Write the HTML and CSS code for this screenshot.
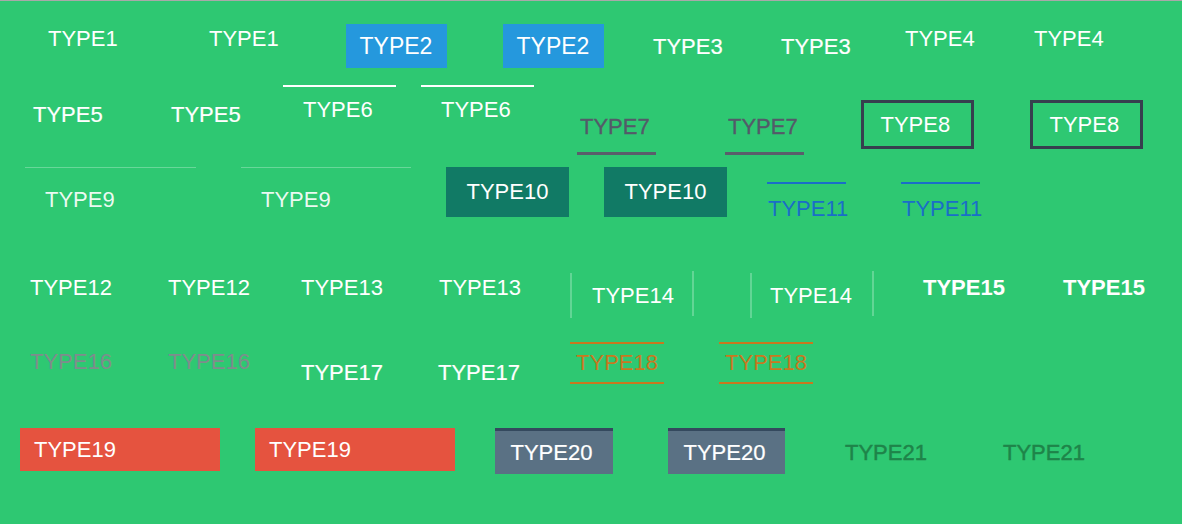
FILE: index.html
```html
<!DOCTYPE html>
<html lang="en">
<head>
<meta charset="utf-8">
<title>Type styles</title>
<link rel="stylesheet" href="styles.css">
</head>
<body>
<main class="page">
  <div class="row row1">
    <span class="t t1">TYPE1</span>
    <span class="t t1">TYPE1</span>
    <span class="t t2">TYPE2</span>
    <span class="t t2">TYPE2</span>
    <span class="t t3">TYPE3</span>
    <span class="t t3">TYPE3</span>
    <span class="t t4">TYPE4</span>
    <span class="t t4">TYPE4</span>
  </div>
  <div class="row row2">
    <span class="t t5">TYPE5</span>
    <span class="t t5">TYPE5</span>
    <span class="t t6">TYPE6</span>
    <span class="t t6">TYPE6</span>
    <span class="t t7">TYPE7</span>
    <span class="t t7">TYPE7</span>
    <span class="t t8">TYPE8</span>
    <span class="t t8">TYPE8</span>
  </div>
  <div class="row row3">
    <span class="t t9">TYPE9</span>
    <span class="t t9 t9b">TYPE9</span>
    <span class="t t10">TYPE10</span>
    <span class="t t10">TYPE10</span>
    <span class="t t11">TYPE11</span>
    <span class="t t11">TYPE11</span>
  </div>
  <div class="row row4">
    <span class="t t12">TYPE12</span>
    <span class="t t12">TYPE12</span>
    <span class="t t13">TYPE13</span>
    <span class="t t13">TYPE13</span>
    <span class="t t14">TYPE14</span>
    <span class="t t14 t14b">TYPE14</span>
    <span class="t t15">TYPE15</span>
    <span class="t t15">TYPE15</span>
  </div>
  <div class="row row5">
    <span class="t t16">TYPE16</span>
    <span class="t t16">TYPE16</span>
    <span class="t t17">TYPE17</span>
    <span class="t t17">TYPE17</span>
    <span class="t t18">TYPE18</span>
    <span class="t t18">TYPE18</span>
  </div>
  <div class="row row6">
    <span class="t t19">TYPE19</span>
    <span class="t t19">TYPE19</span>
    <span class="t t20">TYPE20</span>
    <span class="t t20 t20b">TYPE20</span>
    <span class="t t21">TYPE21</span>
    <span class="t t21">TYPE21</span>
  </div>
</main>
</body>
</html>
```

FILE: styles.css
```css
html, body {
  margin: 0;
  padding: 0;
}

body {
  background: #2ec872;
  border-top: 1px solid #a9a9a9;
  height: 523px;
  overflow: hidden;
  font-family: "Liberation Sans", Arial, sans-serif;
  font-size: 22px;
  color: #ffffff;
}

.page {
  display: flex;
  flex-direction: column;
}

.row {
  display: grid;
  align-items: start;
  justify-items: start;
  box-sizing: border-box;
}

.t {
  display: block;
  box-sizing: border-box;
  line-height: 22px;
  white-space: nowrap;
}

/* Row 1 */
.row1 {
  height: 79px;
  padding-left: 48px;
  grid-template-columns: 161px 137px 157px 150px 128px 124px 129px 1fr;
}
.t1 { margin-top: 27px; }
.t2 {
  margin-top: 23px;
  width: 101px;
  height: 44px;
  line-height: 44px;
  font-size: 23px;
  padding-left: 13.5px;
  background: #2598dd;
}
.t3 { margin-top: 35px; -webkit-text-stroke: 0.2px currentColor; }
.t4 { margin-top: 27px; }

/* Row 2 */
.row2 {
  height: 80px;
  padding-left: 33px;
  grid-template-columns: 138px 112px 138px 156px 148px 136px 169px 1fr;
}
.t5 { margin-top: 24px; -webkit-text-stroke: 0.2px currentColor; }
.t6 {
  margin-top: 5px;
  width: 113px;
  border-top: 2px solid #ffffff;
  padding: 12px 0 0 20px;
}
.t7 {
  margin-top: 36px;
  width: 79px;
  padding: 0 0 14px 3px;
  border-bottom: 3px solid #5a5e6b;
  color: #545a69;
  -webkit-text-stroke: 0.35px currentColor;
}
.t8 {
  margin-top: 20px;
  width: 113px;
  height: 49px;
  border: 3px solid #363f4e;
  line-height: 43px;
  padding-left: 16.5px;
}

/* Row 3 */
.row3 {
  height: 90px;
  padding-left: 25px;
  grid-template-columns: 216px 205px 158px 163px 134px 1fr;
}
.t9 {
  margin-top: 7px;
  width: 171px;
  border-top: 1px solid rgba(255, 255, 255, 0.28);
  padding: 21px 0 0 20px;
  color: rgba(255, 255, 255, 0.92);
}
.t9b { width: 170px; }
.t10 {
  margin-top: 7px;
  width: 123px;
  height: 50px;
  line-height: 50px;
  padding-left: 20.5px;
  background: #117a65;
}
.t11 {
  margin-top: 22px;
  width: 79px;
  border-top: 2px solid #1a6ec8;
  padding: 14px 0 0 1px;
  color: #1a6ec8;
}

/* Row 4 */
.row4 {
  height: 80px;
  padding-left: 30px;
  grid-template-columns: 138px 133px 138px 131px 180px 173px 140px 1fr;
}
.t12, .t13 { margin-top: 27px; }
.t14 {
  position: relative;
  margin-top: 23px;
  width: 124px;
  height: 45px;
  line-height: 45px;
  padding-left: 22px;
}
.t14b { padding-left: 20px; }
.t14::before,
.t14::after {
  content: "";
  position: absolute;
  width: 2px;
  height: 45px;
  background: rgba(255, 255, 255, 0.25);
}
.t14::before { left: 0; top: 0; }
.t14::after { right: 0; top: -2px; }
.t15 { margin-top: 27px; font-weight: bold; }

/* Row 5 */
.row5 {
  height: 80px;
  padding-left: 30px;
  grid-template-columns: 138px 133px 137px 132px 149px 1fr;
}
.t16 { margin-top: 21px; color: #7f8c8d; }
.t17 { margin-top: 32px; -webkit-text-stroke: 0.2px currentColor; }
.t18 {
  margin-top: 12px;
  width: 94px;
  height: 42px;
  border-top: 2px solid #c8781f;
  border-bottom: 2px solid #c8781f;
  line-height: 38px;
  text-align: center;
  color: #c8781f;
}

/* Row 6 */
.row6 {
  height: 114px;
  padding-left: 20px;
  grid-template-columns: 235px 240px 173px 177px 158px 1fr;
}
.t19 {
  margin-top: 18px;
  width: 200px;
  height: 43px;
  line-height: 43px;
  padding-left: 14px;
  background: #e5533f;
}
.t20 {
  margin-top: 18px;
  width: 118px;
  height: 46px;
  border-top: 3px solid #34495e;
  line-height: 43px;
  padding-left: 15.5px;
  background: #5a7184;
  -webkit-text-stroke: 0.2px currentColor;
}
.t20b { width: 117px; }
.t21 {
  margin-top: 32px;
  color: #1e8449;
  -webkit-text-stroke: 0.45px currentColor;
}
```
